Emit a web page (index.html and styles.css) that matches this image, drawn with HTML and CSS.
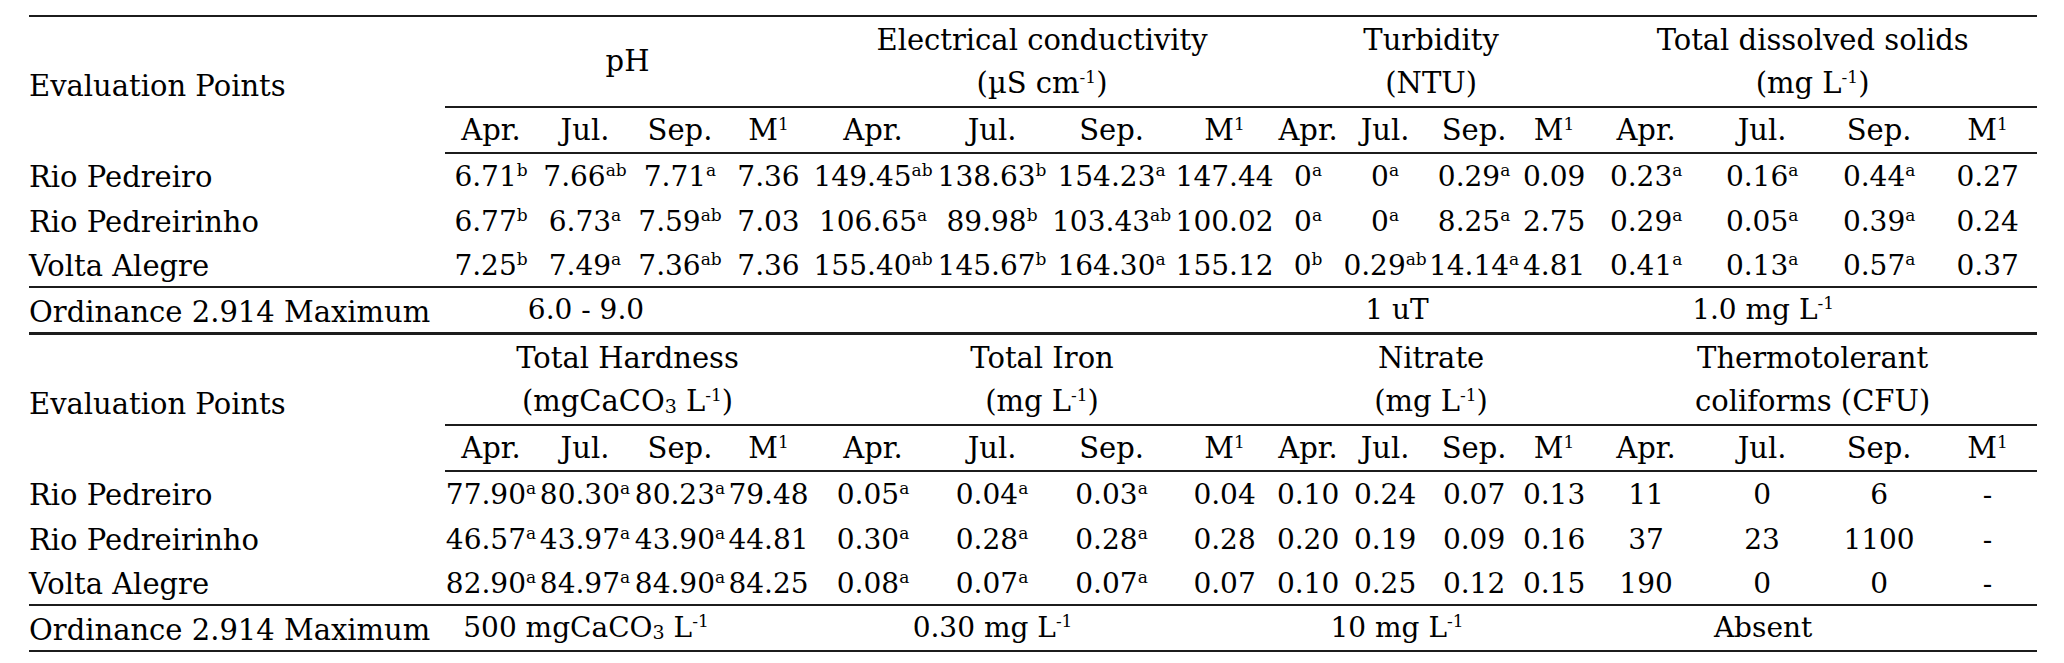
FILE: index.html
```html
<!DOCTYPE html>
<html lang="en">
<head>
<meta charset="utf-8">
<title>Water quality table</title>
<link rel="stylesheet" href="styles.css">
</head>
<body>
<div class="page">
<table class="t">
  <colgroup>
    <col class="c0"><col class="c1"><col class="c2"><col class="c3"><col class="c4">
    <col class="c5"><col class="c6"><col class="c7"><col class="c8">
    <col class="c9"><col class="c10"><col class="c11"><col class="c12">
    <col class="c13"><col class="c14"><col class="c15"><col class="c16">
  </colgroup>
  <tr class="grp">
    <th class="label" rowspan="2">Evaluation Points</th>
    <th class="g" colspan="4">pH</th>
    <th class="g" colspan="4">Electrical conductivity<br>(µS cm<sup>-1</sup>)</th>
    <th class="g" colspan="4">Turbidity<br>(NTU)</th>
    <th class="g" colspan="4">Total dissolved solids<br>(mg L<sup>-1</sup>)</th>
  </tr>
  <tr class="sub">
    <th>Apr.</th><th>Jul.</th><th>Sep.</th><th>M<sup>1</sup></th>
    <th>Apr.</th><th>Jul.</th><th>Sep.</th><th>M<sup>1</sup></th>
    <th>Apr.</th><th>Jul.</th><th>Sep.</th><th>M<sup>1</sup></th>
    <th>Apr.</th><th>Jul.</th><th>Sep.</th><th>M<sup>1</sup></th>
  </tr>
  <tr class="row">
    <td class="label">Rio Pedreiro</td>
    <td>6.71<sup>b</sup></td><td>7.66<sup>ab</sup></td><td>7.71<sup>a</sup></td><td>7.36</td>
    <td>149.45<sup>ab</sup></td><td>138.63<sup>b</sup></td><td>154.23<sup>a</sup></td><td>147.44</td>
    <td>0<sup>a</sup></td><td>0<sup>a</sup></td><td>0.29<sup>a</sup></td><td>0.09</td>
    <td>0.23<sup>a</sup></td><td>0.16<sup>a</sup></td><td>0.44<sup>a</sup></td><td>0.27</td>
  </tr>
  <tr class="row">
    <td class="label">Rio Pedreirinho</td>
    <td>6.77<sup>b</sup></td><td>6.73<sup>a</sup></td><td>7.59<sup>ab</sup></td><td>7.03</td>
    <td>106.65<sup>a</sup></td><td>89.98<sup>b</sup></td><td>103.43<sup>ab</sup></td><td>100.02</td>
    <td>0<sup>a</sup></td><td>0<sup>a</sup></td><td>8.25<sup>a</sup></td><td>2.75</td>
    <td>0.29<sup>a</sup></td><td>0.05<sup>a</sup></td><td>0.39<sup>a</sup></td><td>0.24</td>
  </tr>
  <tr class="row last">
    <td class="label">Volta Alegre</td>
    <td>7.25<sup>b</sup></td><td>7.49<sup>a</sup></td><td>7.36<sup>ab</sup></td><td>7.36</td>
    <td>155.40<sup>ab</sup></td><td>145.67<sup>b</sup></td><td>164.30<sup>a</sup></td><td>155.12</td>
    <td>0<sup>b</sup></td><td>0.29<sup>ab</sup></td><td>14.14<sup>a</sup></td><td>4.81</td>
    <td>0.41<sup>a</sup></td><td>0.13<sup>a</sup></td><td>0.57<sup>a</sup></td><td>0.37</td>
  </tr>
  <tr class="ord">
    <td class="label">Ordinance 2.914 Maximum</td>
    <td colspan="3">6.0 - 9.0</td><td></td>
    <td colspan="3"></td><td></td>
    <td colspan="3">1 uT</td><td></td>
    <td colspan="3">1.0 mg L<sup>-1</sup></td><td></td>
  </tr>
</table>
<table class="t t2">
  <colgroup>
    <col class="c0"><col class="c1"><col class="c2"><col class="c3"><col class="c4">
    <col class="c5"><col class="c6"><col class="c7"><col class="c8">
    <col class="c9"><col class="c10"><col class="c11"><col class="c12">
    <col class="c13"><col class="c14"><col class="c15"><col class="c16">
  </colgroup>
  <tr class="grp">
    <th class="label" rowspan="2">Evaluation Points</th>
    <th class="g" colspan="4">Total Hardness<br>(mgCaCO<sub>3</sub> L<sup>-1</sup>)</th>
    <th class="g" colspan="4">Total Iron<br>(mg L<sup>-1</sup>)</th>
    <th class="g" colspan="4">Nitrate<br>(mg L<sup>-1</sup>)</th>
    <th class="g" colspan="4">Thermotolerant<br>coliforms (CFU)</th>
  </tr>
  <tr class="sub">
    <th>Apr.</th><th>Jul.</th><th>Sep.</th><th>M<sup>1</sup></th>
    <th>Apr.</th><th>Jul.</th><th>Sep.</th><th>M<sup>1</sup></th>
    <th>Apr.</th><th>Jul.</th><th>Sep.</th><th>M<sup>1</sup></th>
    <th>Apr.</th><th>Jul.</th><th>Sep.</th><th>M<sup>1</sup></th>
  </tr>
  <tr class="row">
    <td class="label">Rio Pedreiro</td>
    <td>77.90<sup>a</sup></td><td>80.30<sup>a</sup></td><td>80.23<sup>a</sup></td><td>79.48</td>
    <td>0.05<sup>a</sup></td><td>0.04<sup>a</sup></td><td>0.03<sup>a</sup></td><td>0.04</td>
    <td>0.10</td><td>0.24</td><td>0.07</td><td>0.13</td>
    <td>11</td><td>0</td><td>6</td><td>-</td>
  </tr>
  <tr class="row">
    <td class="label">Rio Pedreirinho</td>
    <td>46.57<sup>a</sup></td><td>43.97<sup>a</sup></td><td>43.90<sup>a</sup></td><td>44.81</td>
    <td>0.30<sup>a</sup></td><td>0.28<sup>a</sup></td><td>0.28<sup>a</sup></td><td>0.28</td>
    <td>0.20</td><td>0.19</td><td>0.09</td><td>0.16</td>
    <td>37</td><td>23</td><td>1100</td><td>-</td>
  </tr>
  <tr class="row last">
    <td class="label">Volta Alegre</td>
    <td>82.90<sup>a</sup></td><td>84.97<sup>a</sup></td><td>84.90<sup>a</sup></td><td>84.25</td>
    <td>0.08<sup>a</sup></td><td>0.07<sup>a</sup></td><td>0.07<sup>a</sup></td><td>0.07</td>
    <td>0.10</td><td>0.25</td><td>0.12</td><td>0.15</td>
    <td>190</td><td>0</td><td>0</td><td>-</td>
  </tr>
  <tr class="ord">
    <td class="label">Ordinance 2.914 Maximum</td>
    <td colspan="3">500 mgCaCO<sub>3</sub> L<sup>-1</sup></td><td></td>
    <td colspan="3">0.30 mg L<sup>-1</sup></td><td></td>
    <td colspan="3">10 mg L<sup>-1</sup></td><td></td>
    <td colspan="3">Absent</td><td></td>
  </tr>
</table>
</div>
</body>
</html>
```
FILE: styles.css
```css
html, body {
  margin: 0;
  padding: 0;
  background: #ffffff;
}

.page {
  padding: 15px 0 0 29px;
}

.t {
  border-collapse: collapse;
  table-layout: fixed;
  width: 2008px;
  font-family: "DejaVu Serif", serif;
  font-size: 28px;
  color: #000;
  border-top: 2px solid #1c1c1c;
  border-bottom: 2px solid #1c1c1c;
}

.t2 {
  margin-top: -1px;
}

.c0 { width: 416px; }
.c1 { width: 92px; }
.c2 { width: 96px; }
.c3 { width: 94px; }
.c4 { width: 83px; }
.c5 { width: 126px; }
.c6 { width: 112px; }
.c7 { width: 127px; }
.c8 { width: 99px; }
.c9 { width: 68px; }
.c10 { width: 86px; }
.c11 { width: 92px; }
.c12 { width: 68px; }
.c13 { width: 116px; }
.c14 { width: 116px; }
.c15 { width: 118px; }
.c16 { width: 99px; }

.t th,
.t td {
  padding: 0;
  font-weight: normal;
  text-align: center;
  vertical-align: middle;
  white-space: nowrap;
  line-height: 34px;
}

.t th {
  font-size: 29px;
}

.t .label {
  text-align: left;
  padding-top: 3px;
  font-size: 29px;
}

.grp {
  height: 91px;
}

.grp th {
  line-height: 43px;
}

.grp .g {
  border-bottom: 2px solid #1c1c1c;
}

.sub {
  height: 46px;
}

.sub th {
  border-bottom: 2px solid #1c1c1c;
}

.row {
  height: 44.7px;
}

.row td {
  padding-top: 3px;
}

.row.last td {
  border-bottom: 2px solid #1c1c1c;
}

.ord {
  height: 46px;
}

.t sup {
  font-size: 17px;
  line-height: 0;
  vertical-align: 10px;
}

.t sub {
  font-size: 19px;
  line-height: 0;
  vertical-align: -2px;
}
```
